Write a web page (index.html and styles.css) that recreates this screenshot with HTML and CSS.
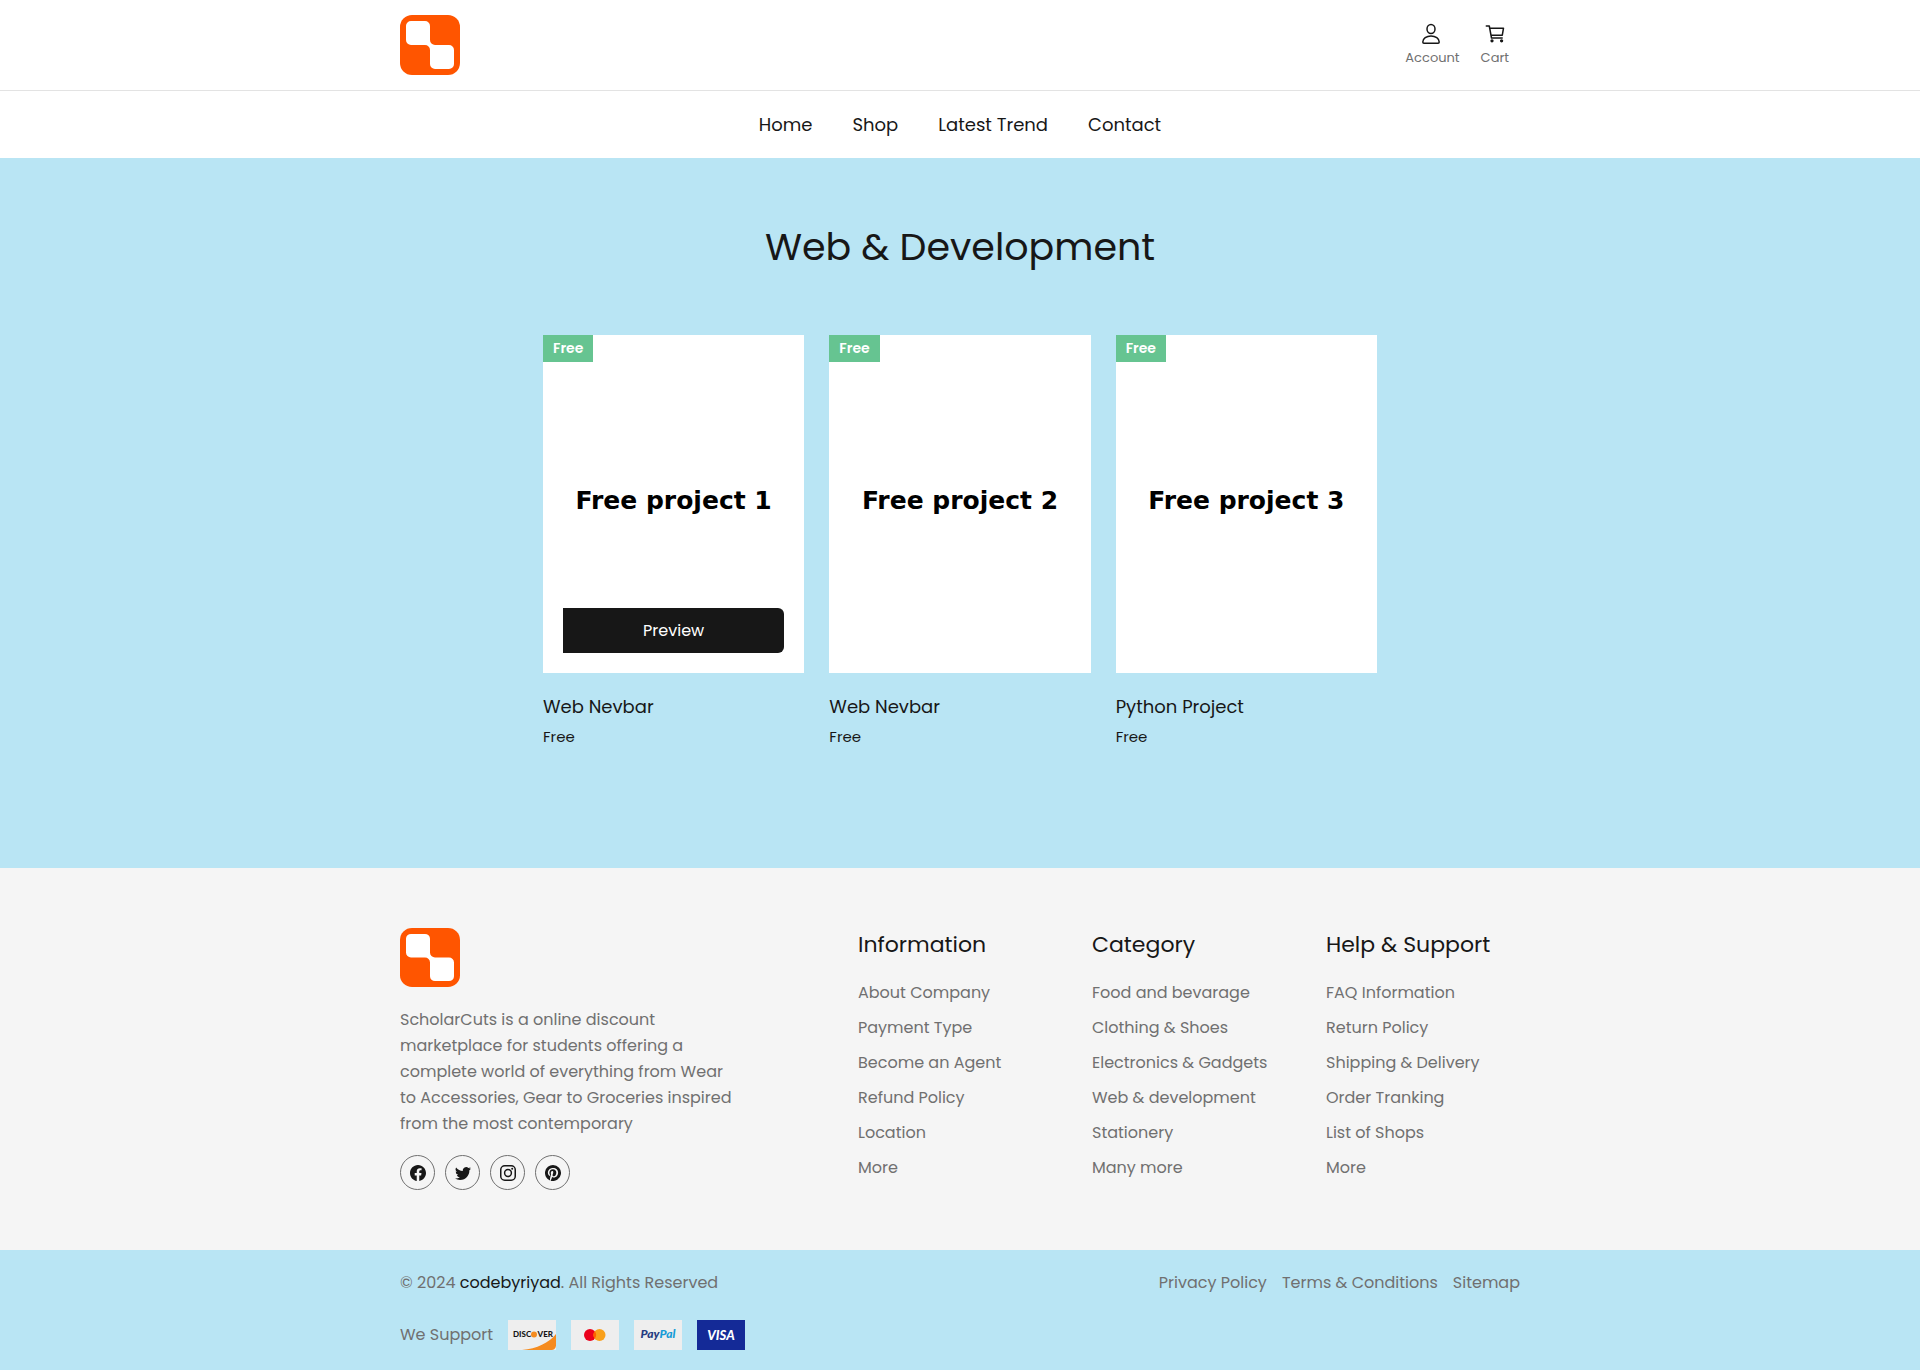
FILE: index.html
```html
<!DOCTYPE html>
<html lang="en">
<head>
<meta charset="utf-8">
<meta name="viewport" content="width=device-width, initial-scale=1">
<title>Web &amp; Development</title>
<link rel="stylesheet" href="styles.css">
</head>
<body>
<svg class="sprite" aria-hidden="true">
  <symbol id="logo" viewBox="0 0 60 60" preserveAspectRatio="none">
    <rect width="60" height="60" rx="12" fill="#ff5500"/>
    <path fill="#fff" d="M11 6h14a5 5 0 0 1 5 5v14a5 5 0 0 0 5 5h14a5 5 0 0 1 5 5v14a5 5 0 0 1-5 5H35a5 5 0 0 1-5-5V35a5 5 0 0 0-5-5H11a5 5 0 0 1-5-5V11a5 5 0 0 1 5-5z"/>
  </symbol>
</svg>

<header>
  <div class="topbar">
    <div class="container topbar-row">
      <a class="logo" href="#" aria-label="ScholarCuts"><svg width="60" height="60"><use href="#logo"/></svg></a>
      <div class="actions">
        <a class="action" href="#">
          <svg width="22" height="22" viewBox="1 0 22 22" fill="none" stroke="#171717" stroke-width="1.5" stroke-linejoin="round"><ellipse cx="11" cy="6" rx="4" ry="4.5"/><path d="M11 13c-4.500 0-8.200 2.600-8.200 6 0 .7.400 1.200 1.100 1.200h14.200c.7 0 1.100-.5 1.100-1.200 0-3.400-3.700-6-8.200-6z"/></svg>
          <span>Account</span>
        </a>
        <a class="action" href="#">
          <svg width="22" height="22" viewBox="0 0 22 22" fill="none" stroke="#171717" stroke-width="1.500" stroke-linecap="round" stroke-linejoin="round"><path d="M2.300 3h3l2.200 12h10.700M5.800 5.200h13.700l-1.200 7H7"/><circle cx="8" cy="17.800" r=".9" fill="#171717"/><circle cx="17.600" cy="17.800" r=".9" fill="#171717"/></svg>
          <span>Cart</span>
        </a>
      </div>
    </div>
  </div>
  <nav class="nav" aria-label="Main">
    <a href="#">Home</a>
    <a href="#">Shop</a>
    <a href="#">Latest Trend</a>
    <a href="#">Contact</a>
  </nav>
</header>

<main class="products">
  <h1>Web &amp; Development</h1>
  <ul class="grid">
    <li>
      <div class="cover">
        <span class="badge">Free</span>
        <span class="cover-title">Free project 1</span>
        <button class="preview" type="button">Preview</button>
      </div>
      <h2 class="name"><a href="#">Web Nevbar</a></h2>
      <p class="price">Free</p>
    </li>
    <li>
      <div class="cover">
        <span class="badge">Free</span>
        <span class="cover-title">Free project 2</span>
      </div>
      <h2 class="name"><a href="#">Web Nevbar</a></h2>
      <p class="price">Free</p>
    </li>
    <li>
      <div class="cover">
        <span class="badge">Free</span>
        <span class="cover-title">Free project 3</span>
      </div>
      <h2 class="name"><a href="#">Python Project</a></h2>
      <p class="price">Free</p>
    </li>
  </ul>
</main>

<footer>
  <div class="footer-main">
    <div class="container footer-grid">
      <div class="brand">
        <a class="logo" href="#" aria-label="ScholarCuts"><svg width="60" height="59"><use href="#logo"/></svg></a>
        <p>ScholarCuts is a online discount<br>marketplace for students offering a<br>complete world of everything from Wear<br>to Accessories, Gear to Groceries inspired<br>from the most contemporary</p>
        <div class="socials">
          <a href="#" aria-label="Facebook"><svg width="16" height="16" viewBox="0 0 16 16"><path d="M16 8.049c0-4.446-3.582-8.050-8-8.050C3.580 0-.002 3.603-.002 8.050c0 4.017 2.926 7.347 6.750 7.951v-5.625h-2.030V8.050H6.750V6.275c0-2.017 1.195-3.131 3.022-3.131.876 0 1.791.157 1.791.157v1.980h-1.009c-.993 0-1.303.621-1.303 1.258v1.510h2.218l-.354 2.326H9.250V16c3.824-.604 6.750-3.934 6.750-7.951z"/></svg></a>
          <a href="#" aria-label="Twitter"><svg width="16" height="16" viewBox="0 0 16 16"><path d="M5.026 15c6.038 0 9.341-5.003 9.341-9.334 0-.14 0-.282-.006-.422A6.685 6.685 0 0 0 16 3.542a6.658 6.658 0 0 1-1.889.518 3.301 3.301 0 0 0 1.447-1.817 6.533 6.533 0 0 1-2.087.793A3.286 3.286 0 0 0 7.875 6.030a9.325 9.325 0 0 1-6.767-3.429 3.289 3.289 0 0 0 1.018 4.382A3.323 3.323 0 0 1 .64 6.575v.045a3.288 3.288 0 0 0 2.632 3.218 3.203 3.203 0 0 1-.865.115 3.230 3.230 0 0 1-.614-.057 3.283 3.283 0 0 0 3.067 2.277A6.588 6.588 0 0 1 .78 13.580a6.320 6.320 0 0 1-.78-.045A9.344 9.344 0 0 0 5.026 15z"/></svg></a>
          <a href="#" aria-label="Instagram"><svg width="16" height="16" viewBox="0 0 16 16"><g fill="none" stroke="#171717" stroke-width="1.500"><rect x=".75" y=".75" width="14.500" height="14.500" rx="4"/><circle cx="8" cy="8" r="3.400"/></g><circle cx="12.200" cy="3.800" r="1"/></svg></a>
          <a href="#" aria-label="Pinterest"><svg width="16" height="16" viewBox="0 0 16 16"><path d="M8 0a8 8 0 0 0-2.915 15.452c-.07-.633-.134-1.606.027-2.297.146-.625.938-3.977.938-3.977s-.239-.479-.239-1.187c0-1.113.645-1.943 1.448-1.943.682 0 1.012.512 1.012 1.127 0 .686-.437 1.712-.663 2.663-.188.796.4 1.446 1.185 1.446 1.422 0 2.515-1.500 2.515-3.664 0-1.915-1.377-3.254-3.342-3.254-2.276 0-3.612 1.707-3.612 3.471 0 .688.265 1.425.595 1.826a.24.24 0 0 1 .056.23c-.061.252-.196.796-.222.907-.035.146-.116.177-.268.107-1-.465-1.624-1.926-1.624-3.100 0-2.523 1.834-4.840 5.286-4.840 2.775 0 4.932 1.977 4.932 4.620 0 2.757-1.739 4.976-4.151 4.976-.811 0-1.573-.421-1.834-.919l-.498 1.902c-.181.695-.669 1.566-.995 2.097A8 8 0 1 0 8 0z"/></svg></a>
        </div>
      </div>
      <div class="links">
        <h3>Information</h3>
        <ul>
          <li><a href="#">About Company</a></li>
          <li><a href="#">Payment Type</a></li>
          <li><a href="#">Become an Agent</a></li>
          <li><a href="#">Refund Policy</a></li>
          <li><a href="#">Location</a></li>
          <li><a href="#">More</a></li>
        </ul>
      </div>
      <div class="links">
        <h3>Category</h3>
        <ul>
          <li><a href="#">Food and bevarage</a></li>
          <li><a href="#">Clothing &amp; Shoes</a></li>
          <li><a href="#">Electronics &amp; Gadgets</a></li>
          <li><a href="#">Web &amp; development</a></li>
          <li><a href="#">Stationery</a></li>
          <li><a href="#">Many more</a></li>
        </ul>
      </div>
      <div class="links">
        <h3>Help &amp; Support</h3>
        <ul>
          <li><a href="#">FAQ Information</a></li>
          <li><a href="#">Return Policy</a></li>
          <li><a href="#">Shipping &amp; Delivery</a></li>
          <li><a href="#">Order Tranking</a></li>
          <li><a href="#">List of Shops</a></li>
          <li><a href="#">More</a></li>
        </ul>
      </div>
    </div>
  </div>
  <div class="footer-bottom">
    <div class="container">
      <div class="legal">
        <p>© 2024 <a class="author" href="#">codebyriyad</a>. All Rights Reserved</p>
        <div class="legal-links">
          <a href="#">Privacy Policy</a>
          <a href="#">Terms &amp; Conditions</a>
          <a href="#">Sitemap</a>
        </div>
      </div>
      <div class="support">
        <p>We Support</p>
        <svg class="card" width="48" height="30" viewBox="0 0 48 30" role="img" aria-label="Discover">
          <rect width="48" height="30" fill="#eee"/>
          <path d="M48 14v11.500a4.500 4.500 0 0 1-4.500 4.500H14C29 28.500 41 23 48 14z" fill="#f58b1f"/>
          <text x="5" y="17" font-size="8">DISC</text>
          <circle cx="26" cy="14.500" r="3" fill="#f58b1f"/>
          <text x="45" y="17" font-size="8" text-anchor="end">VER</text>
        </svg>
        <svg class="card" width="48" height="30" viewBox="0 0 48 30" role="img" aria-label="Mastercard">
          <rect width="48" height="30" fill="#eee"/>
          <circle cx="19" cy="15" r="6" fill="#eb001b"/><circle cx="28.500" cy="15" r="6" fill="#f9a01b"/>
          <path d="M23.750 11.300a6 6 0 0 1 0 7.400 6 6 0 0 1 0-7.400z" fill="#ff5f00"/>
        </svg>
        <svg class="card card-italic" width="48" height="30" viewBox="0 0 48 30" role="img" aria-label="PayPal">
          <rect width="48" height="30" fill="#eee"/>
          <text x="24" y="18" font-size="12" text-anchor="middle" fill="#253b80">Pay<tspan fill="#179bd7">Pal</tspan></text>
        </svg>
        <svg class="card card-italic" width="48" height="30" viewBox="0 0 48 30" role="img" aria-label="Visa">
          <rect width="48" height="30" fill="#142a97"/>
          <text x="24" y="20" font-size="13" text-anchor="middle" fill="#fff">VISA</text>
        </svg>
      </div>
    </div>
  </div>
</footer>
</body>
</html>
```

FILE: styles.css
```css
* {
  box-sizing: border-box;
  margin: 0;
  padding: 0;
}

body {
  background: #fff;
  color: #171717;
  font-family: Poppins, Inter, "Open Sans", sans-serif;
  font-size: 16px;
  line-height: 26px;
}

a {
  color: inherit;
  text-decoration: none;
}

ul {
  list-style: none;
}

svg {
  display: block;
}

.sprite {
  position: absolute;
  width: 0;
  height: 0;
}

.container {
  width: 100%;
  max-width: 1160px;
  margin: 0 auto;
  padding: 0 20px;
}

/* Header */
.topbar {
  padding: 15px 0;
  border-bottom: 1px solid #e3e3e3;
}

.topbar-row {
  display: flex;
  align-items: center;
  justify-content: space-between;
}

.actions {
  display: flex;
  gap: 21px;
  padding-right: 11px;
}

.action {
  display: flex;
  flex-direction: column;
  align-items: center;
  gap: 3px;
  color: #707070;
  font-size: 13px;
  line-height: 20px;
}

.nav {
  display: flex;
  flex-wrap: wrap;
  justify-content: center;
  gap: 0 40px;
  padding: 20px;
  font-size: 18px;
  line-height: 27px;
}

/* Products */
.products {
  padding: 60px 20px 120px;
  background: #b9e5f4;
}

h1 {
  margin-bottom: 60px;
  font-size: 38px;
  font-weight: 400;
  line-height: 57px;
  text-align: center;
}

.grid {
  display: grid;
  grid-template-columns: repeat(auto-fit, minmax(240px, 1fr));
  gap: 25px;
  max-width: 834px;
  margin: 0 auto;
}

.cover {
  position: relative;
  display: grid;
  place-items: center;
  aspect-ratio: 261 / 338;
  padding-bottom: 6px;
  background: #fff;
}

.cover-title {
  color: #000;
  font-family: "DejaVu Sans", sans-serif;
  font-size: 25px;
  font-weight: 700;
  line-height: 36px;
}

.badge {
  position: absolute;
  top: 0;
  left: 0;
  padding: 0 10px;
  background: #66c491;
  color: #fff;
  font-size: 14px;
  font-weight: 600;
  line-height: 27px;
}

.preview {
  position: absolute;
  right: 20px;
  bottom: 20px;
  left: 20px;
  height: 45px;
  border: 0;
  border-radius: 0 6px 6px 0;
  background: #171717;
  color: #fff;
  font: inherit;
}

.name {
  margin: 20px 0 5px;
  font-size: 18px;
  font-weight: 400;
  line-height: 27px;
}

.price {
  font-size: 15px;
  line-height: 23px;
}

/* Footer */
.footer-main {
  padding: 60px 0;
  background: #f5f5f5;
  color: #707070;
}

.footer-grid {
  display: grid;
  grid-template-columns: minmax(0, 1fr) repeat(3, 194px);
  gap: 40px;
}

.brand p {
  margin: 20px 0 18px;
}

.socials {
  display: flex;
  gap: 10px;
}

.socials a {
  display: grid;
  place-items: center;
  width: 35px;
  height: 35px;
  border: 1px solid #707070;
  border-radius: 50%;
}

.socials svg {
  fill: #171717;
}

.links h3 {
  margin-bottom: 18px;
  color: #171717;
  font-size: 22px;
  font-weight: 400;
  line-height: 34px;
}

.links ul {
  display: grid;
  gap: 10px;
  line-height: 25px;
}

.footer-bottom {
  padding: 20px 0;
  background: #b9e5f4;
  color: #707070;
}

.legal {
  display: flex;
  flex-wrap: wrap;
  justify-content: space-between;
  margin-bottom: 24px;
}

.author {
  color: #171717;
}

.legal-links {
  display: flex;
  gap: 15px;
}

.support {
  display: flex;
  align-items: center;
  gap: 15px;
}

.card {
  fill: #171717;
  font-family: Lato, sans-serif;
  font-weight: 900;
}

.card-italic {
  font-style: italic;
}

@media (max-width: 1080px) {
  .footer-grid {
    grid-template-columns: repeat(auto-fit, minmax(194px, 1fr));
  }
}
```
